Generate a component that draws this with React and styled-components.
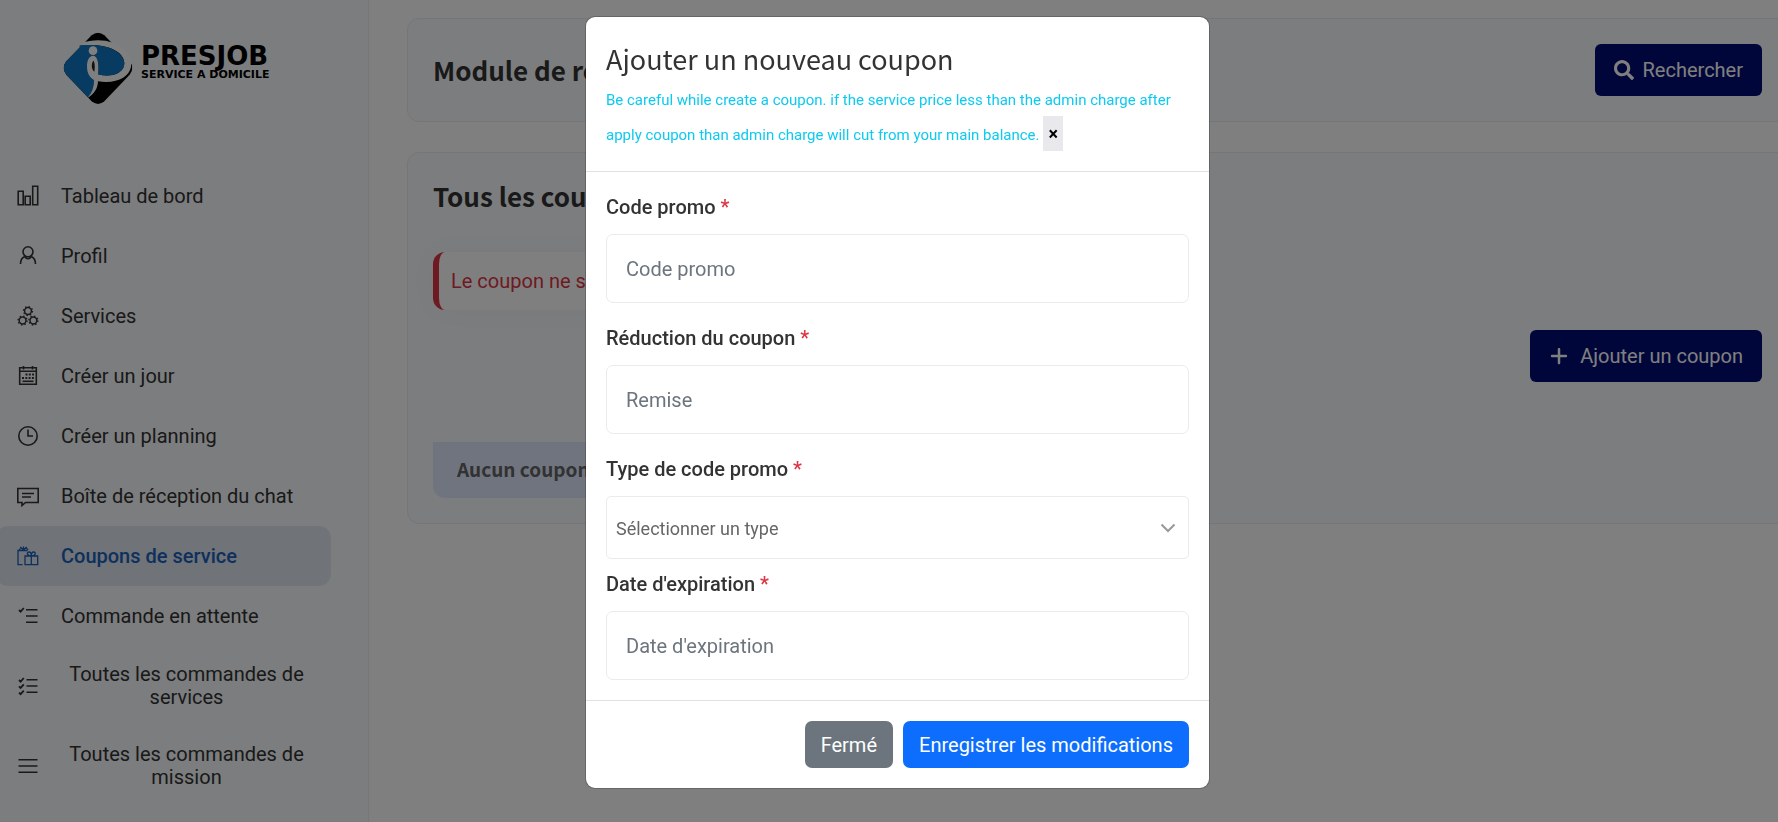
import React from "react";
import styled, { createGlobalStyle } from "styled-components";
import { FaSearch } from "react-icons/fa";
import { FaPlus } from "react-icons/fa6";

const GlobalStyle = createGlobalStyle`
  * {
    box-sizing: border-box;
  }
  body {
    margin: 0;
    background: #fff;
    color: #333;
    font-family: Roboto, "Liberation Sans", sans-serif;
    font-size: 20px;
    overflow: hidden;
  }
  h1, h2, p {
    margin: 0;
  }
  button, input, select {
    font-family: inherit;
  }
`;

const headingFont = `"Noto Sans CJK SC", "Noto Sans", sans-serif`;

const Page = styled.div`
  display: flex;
  height: 100vh;
  overflow: hidden;
`;

const Sidebar = styled.aside`
  flex: 0 0 369px;
  background: #f8fafd;
  border-right: 1px solid #eceef2;
`;

const Brand = styled.a`
  display: flex;
  align-items: flex-start;
  gap: 8px;
  height: 166px;
  padding: 32px 0 0 63px;
  color: #000;
  text-decoration: none;
  font-family: "DejaVu Sans", sans-serif;
  font-weight: bold;
`;

const BrandText = styled.span`
  display: flex;
  flex-direction: column;
  padding-top: 11px;
`;

const BrandName = styled.span`
  font-size: 26px;
  line-height: 26px;
`;

const BrandTag = styled.span`
  font-size: 11px;
  line-height: 12px;
`;

const Nav = styled.nav`
  width: 335px;
  margin-left: -4px;
`;

const NavItem = styled.a`
  display: flex;
  align-items: center;
  gap: 22px;
  min-height: 60px;
  padding: 17px 19px 17px 21px;
  border-radius: 12px;
  background: ${(props) => (props.$active ? "#e0e6f0" : "transparent")};
  color: ${(props) => (props.$active ? "#1d60b8" : "#333")};
  font-weight: ${(props) => (props.$active ? 500 : 400)};
  line-height: 23px;
  text-decoration: none;

  svg {
    flex: none;
  }
  span {
    flex: ${(props) => (props.$wrap ? 1 : "none")};
    text-align: center;
  }
`;

const Main = styled.main`
  flex: 1;
  display: flex;
  flex-direction: column;
  gap: 30px;
  min-width: 0;
  margin-right: -10px;
  padding: 18px 0 0 38px;
`;

const Card = styled.section`
  padding: 25px;
  background: #f8fafd;
  border: 1px solid #e9ecf1;
  border-radius: 12px;
`;

const CardRow = styled.div`
  display: flex;
  align-items: center;
  justify-content: ${(props) => (props.$end ? "flex-end" : "space-between")};
`;

const CardTitle = styled.h1`
  font-family: ${headingFont};
  font-size: 26px;
  line-height: 36px;
  font-weight: 600;
`;

const NavyButton = styled.button`
  display: flex;
  align-items: center;
  gap: ${(props) => props.$gap || 9}px;
  height: 52px;
  padding: 0 19px;
  border: 0;
  border-radius: 6px;
  background: #000c74;
  color: #fff;
  font-size: 20px;
`;

const Notice = styled.p`
  width: 56%;
  margin: 38px 0 20px;
  padding: 17px 12px;
  border-left: 6px solid #dc3545;
  border-radius: 12px;
  background: #fff;
  box-shadow: 0 0 30px rgba(0, 0, 0, 0.03);
  color: #dc3545;
  line-height: 24px;
`;

const EmptyBox = styled.p`
  width: 56%;
  margin-top: 60px;
  padding: 13px 24px 15px;
  border-radius: 0 0 12px 12px;
  background: #dfe9ff;
  color: #646464;
  font-family: ${headingFont};
  font-size: 19px;
  font-weight: 700;
  line-height: 28px;
`;

const Backdrop = styled.div`
  position: fixed;
  inset: 0;
  display: flex;
  justify-content: center;
  align-items: flex-start;
  padding: 16px 0 0 17px;
  background: rgba(0, 0, 0, 0.5);
`;

const Modal = styled.form`
  width: 625px;
  background: #fff;
  background-clip: padding-box;
  border: 1px solid rgba(0, 0, 0, 0.2);
  border-radius: 10px;
`;

const ModalHeader = styled.header`
  padding: 22px 20px 20px;
  border-bottom: 1px solid #dee2e6;
`;

const ModalTitle = styled.h2`
  margin-bottom: 2px;
  font-family: ${headingFont};
  font-size: 27px;
  line-height: 40px;
  font-weight: 400;
`;

const ModalNote = styled.p`
  color: #0dcaf0;
  line-height: 35px;

  small {
    font-size: 15px;
    line-height: 1;
  }
`;

const CloseButton = styled.button`
  width: 20px;
  height: 35px;
  padding: 0;
  border: 0;
  background: #e9e9ed;
  color: #000;
  font-size: 18px;
  font-weight: 700;
  vertical-align: top;
`;

const ModalBody = styled.div`
  padding: 18px 20px 20px;
`;

const Field = styled.div`
  display: flex;
  flex-direction: column;
  gap: 9px;
  margin-top: ${(props) => (props.$tight ? 8 : 18)}px;

  &:first-child {
    margin-top: 0;
  }
`;

const Label = styled.label`
  font-weight: 500;
  line-height: 35px;

  span {
    color: #dc3545;
  }
`;

const Input = styled.input`
  height: 69px;
  padding: 0 19px;
  border: 1px solid #ebebeb;
  border-radius: 7px;
  background: #fff;
  font-size: 20px;

  &::placeholder {
    color: #6c757d;
    opacity: 1;
  }
`;

const SelectBox = styled.div`
  display: grid;
  align-items: center;

  > * {
    grid-area: 1 / 1;
  }
  svg {
    justify-self: end;
    margin-right: 13px;
    pointer-events: none;
  }
`;

const Select = styled.select`
  width: 100%;
  height: 63px;
  padding: 2px 9px 0;
  appearance: none;
  border: 1px solid #ebebeb;
  border-radius: 5px;
  background: #fff;
  color: #666;
  font-size: 18px;
`;

const ModalFooter = styled.footer`
  display: flex;
  justify-content: flex-end;
  gap: 10px;
  padding: 20px;
  border-top: 1px solid #dee2e6;
`;

const FooterButton = styled.button`
  height: 47px;
  padding: 0 16px;
  border: 0;
  border-radius: 7px;
  background: ${(props) => (props.$primary ? "#0d6efd" : "#6c757d")};
  color: #fff;
  font-size: 20px;
`;

const Icon = ({ children }) => (
  <svg
    width="22"
    height="22"
    viewBox="0 0 22 22"
    fill="none"
    stroke="currentColor"
    strokeWidth="1.6"
  >
    {children}
  </svg>
);

const Gear = ({ x, y }) => (
  <g>
    <circle cx={x} cy={y} r="3.4" strokeWidth="1.5" />
    <circle cx={x} cy={y} r="4.5" strokeWidth="1.3" strokeDasharray="1.5 2.03" />
  </g>
);

const BarsIcon = () => (
  <Icon>
    <path d="M1.2 6.2h5v13.6h-5zM8.2 11.2h5v8.6h-5zM15.7 1.2h5v18.6h-5z" />
  </Icon>
);

const UserIcon = () => (
  <Icon>
    <circle cx="11" cy="6.8" r="5" />
    <path d="M3.5 19c0-4 1.9-6.5 4.3-7.5M18.5 19c0-4-1.9-6.5-4.3-7.5M8 11.3c.8 3.2 5.2 3.2 6 0" />
  </Icon>
);

const ServicesIcon = () => (
  <Icon>
    <Gear x={11} y={6} />
    <Gear x={5.6} y={15.5} />
    <Gear x={16.4} y={15.5} />
  </Icon>
);

const CalendarIcon = () => (
  <Icon>
    <path d="M2.7 2.7h16.6v16.6H2.7zM2.7 6.3h16.6M6.5 1v3.5M15.5 1v3.5" />
    <path d="M8.5 9.5h8.5M5 13h12" strokeWidth="1.8" strokeDasharray="2 1.3" />
    <path d="M5.5 16.3h11" />
  </Icon>
);

const ClockIcon = () => (
  <Icon>
    <circle cx="11" cy="11" r="9.2" />
    <path d="M11 4.5V11h5" />
  </Icon>
);

const ChatIcon = () => (
  <Icon>
    <path d="M.8 3.5h20.4v14H8.5L5 20.5v-3H.8zM5 8.5h12M5 12h9" />
  </Icon>
);

const GiftIcon = () => (
  <Icon>
    <path
      d="M5.5 19.7H1V5.5h9.5M2.5 5c0-2 2.5-2.5 4-.2C8 2.5 10.5 3 11 5M6.5 4.8V1.5M3.2 2l3.3 2.8L9.8 2"
      strokeWidth="1.3"
    />
    <path
      d="M8 11h12.7v8.7H8zM14.3 11v8.7M14.3 11c-4.5 0-5-4-2.3-4 1.6 0 2.3 2 2.3 4zM14.3 11c4.5 0 5-4 2.3-4-1.6 0-2.3 2-2.3 4z"
      strokeWidth="1.3"
    />
  </Icon>
);

const PendingIcon = () => (
  <Icon>
    <path d="M9 4.7h11.5M9 11h11.5M9 17.3h11.5" />
    <path d="M2 5l1.6 1.6L6.8 3" strokeWidth="1.8" />
  </Icon>
);

const ChecklistIcon = () => (
  <Icon>
    <path d="M9.5 4.7h11M9.5 11h11M9.5 17.3h11" />
    <path d="M2 5l1.6 1.6L6.8 3M2 11.3l1.6 1.6 3.2-3.6M2 17.6l1.6 1.6 3.2-3.6" strokeWidth="1.8" />
  </Icon>
);

const ListIcon = () => (
  <Icon>
    <path d="M1.5 4.7h19M1.5 11h19M1.5 17.3h19" />
  </Icon>
);

const LogoMark = () => (
  <svg width="70" height="73" viewBox="0 0 210 219">
    <clipPath id="mark">
      <path d="M86 10Q105-6 124 10L200 88Q216 108 200 128L124 208Q105 224 86 208L10 128Q-6 108 10 88Z" />
    </clipPath>
    <g clipPath="url(#mark)">
      <rect width="210" height="219" fill="#000" />
      <path d="M-5 38H90V120L100 150C98 175 90 190 72 198L-5 160Z" fill="#1077c3" />
    </g>
    <path
      d="M56 32C85 23 120 21 150 32C190 47 209 77 204 105C198 135 160 157 105 148C104 170 94 186 74 197C89 182 94 160 93 142C75 130 70 110 75 88C78 76 84 72 92 72C104 74 108 95 105 127C145 138 184 124 184 94C184 55 125 33 56 40Z"
      fill="#fff"
    />
    <path
      d="M64 40C125 33 184 58 184 94C184 124 145 138 105 127C108 95 104 74 92 72Q78 70 75 88Q70 115 84 138L50 140V40Z"
      fill="#1077c3"
    />
    <path
      d="M92 71C77 71 72 87 72 103C72 127 82 138 93 144L105 147V127C108 95 104 74 92 71ZM91 86C96 92 96 106 94 119C85 112 84 95 91 86Z"
      fill="#fff"
      fillRule="evenodd"
    />
    <path d="M91 86C96 92 96 106 94 119C85 112 84 95 91 86Z" fill="#222" />
    <circle cx="90" cy="56" r="13" fill="#fff" />
  </svg>
);

const links = [
  { text: "Tableau de bord", icon: <BarsIcon /> },
  { text: "Profil", icon: <UserIcon /> },
  { text: "Services", icon: <ServicesIcon /> },
  { text: "Créer un jour", icon: <CalendarIcon /> },
  { text: "Créer un planning", icon: <ClockIcon /> },
  { text: "Boîte de réception du chat", icon: <ChatIcon /> },
  { text: "Coupons de service", icon: <GiftIcon />, active: true },
  { text: "Commande en attente", icon: <PendingIcon /> },
  { text: "Toutes les commandes de services", icon: <ChecklistIcon />, wrap: true },
  { text: "Toutes les commandes de mission", icon: <ListIcon />, wrap: true },
];

function CouponModal() {
  return (
    <Backdrop>
      <Modal role="dialog" aria-labelledby="modal-title" onSubmit={(e) => e.preventDefault()}>
        <ModalHeader>
          <ModalTitle id="modal-title">Ajouter un nouveau coupon</ModalTitle>
          <ModalNote>
            <small>
              Be careful while create a coupon. if the service price less than
              the admin charge after apply coupon than admin charge will cut
              from your main balance.{" "}
            </small>
            <CloseButton type="button">×</CloseButton>
          </ModalNote>
        </ModalHeader>
        <ModalBody>
          <Field>
            <Label htmlFor="code">
              Code promo <span>*</span>
            </Label>
            <Input id="code" placeholder="Code promo" />
          </Field>
          <Field>
            <Label htmlFor="discount">
              Réduction du coupon <span>*</span>
            </Label>
            <Input id="discount" placeholder="Remise" />
          </Field>
          <Field>
            <Label htmlFor="type">
              Type de code promo <span>*</span>
            </Label>
            <SelectBox>
              <Select id="type">
                <option>Sélectionner un type</option>
              </Select>
              <svg width="16" height="10" viewBox="0 0 16 10" fill="none" stroke="#999" strokeWidth="2">
                <path d="M1.5 1.5L8 8l6.5-6.5" />
              </svg>
            </SelectBox>
          </Field>
          <Field $tight>
            <Label htmlFor="expire">
              Date d'expiration <span>*</span>
            </Label>
            <Input id="expire" placeholder="Date d'expiration" />
          </Field>
        </ModalBody>
        <ModalFooter>
          <FooterButton type="button">Fermé</FooterButton>
          <FooterButton type="submit" $primary>
            Enregistrer les modifications
          </FooterButton>
        </ModalFooter>
      </Modal>
    </Backdrop>
  );
}

function App() {
  return (
    <>
      <GlobalStyle />
      <Page>
        <Sidebar>
          <Brand href="#">
            <LogoMark />
            <BrandText>
              <BrandName>PRESJOB</BrandName>
              <BrandTag>SERVICE A DOMICILE</BrandTag>
            </BrandText>
          </Brand>
          <Nav>
            {links.map((link) => (
              <NavItem href="#" key={link.text} $active={link.active} $wrap={link.wrap}>
                {link.icon}
                <span>{link.text}</span>
              </NavItem>
            ))}
          </Nav>
        </Sidebar>
        <Main>
          <Card>
            <CardRow>
              <CardTitle>Module de réduction</CardTitle>
              <NavyButton>
                <FaSearch />
                Rechercher
              </NavyButton>
            </CardRow>
          </Card>
          <Card>
            <CardTitle as="h2">Tous les coupons</CardTitle>
            <Notice>Le coupon ne s'applique pas</Notice>
            <CardRow $end>
              <NavyButton $gap={11}>
                <FaPlus />
                Ajouter un coupon
              </NavyButton>
            </CardRow>
            <EmptyBox>Aucun coupon trouvé</EmptyBox>
          </Card>
        </Main>
      </Page>
      <CouponModal />
    </>
  );
}

export default App;
